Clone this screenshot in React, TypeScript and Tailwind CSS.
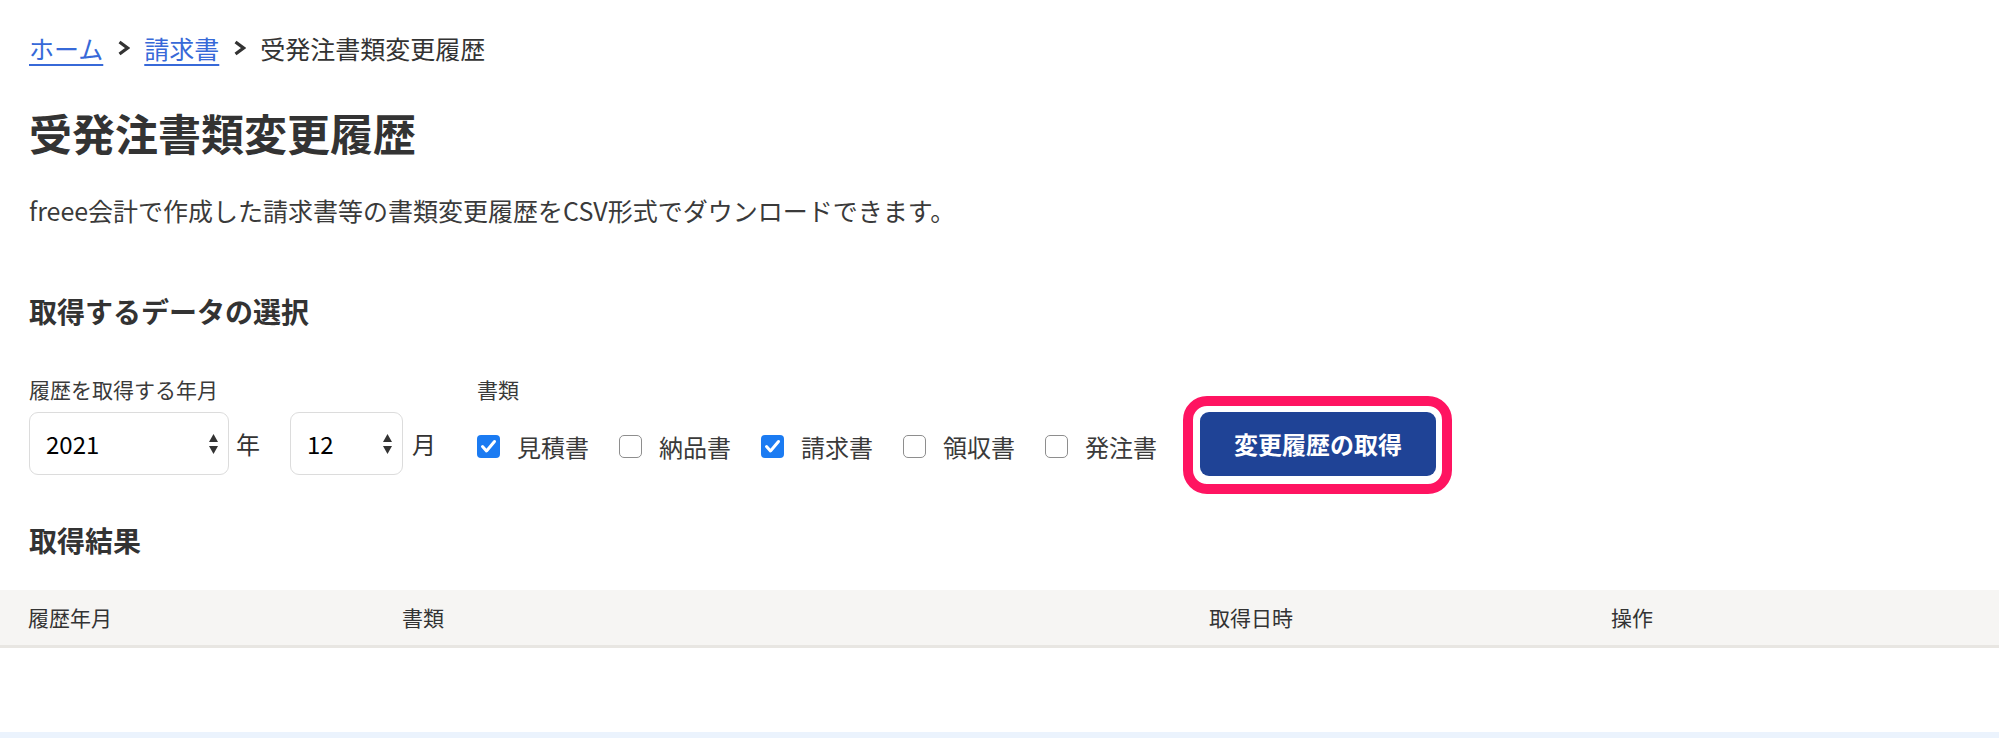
import React from "react";

const docs = [
  { label: "見積書", checked: true },
  { label: "納品書", checked: false },
  { label: "請求書", checked: true },
  { label: "領収書", checked: false },
  { label: "発注書", checked: false },
];

function Chevron() {
  return (
    <svg width="13" height="16" viewBox="0 0 13 16" className="mx-[14px] shrink-0">
      <polyline points="2.5,2 10.5,8 2.5,14" fill="none" stroke="#333" strokeWidth="3.2" />
    </svg>
  );
}

function SelectBox({ value, width }: { value: string; width: string }) {
  return (
    <div
      className={`${width} h-[63px] flex items-center justify-between pl-[16px] pr-[10px] bg-white border-[1.5px] border-[#dcdcdc] rounded-[9px] text-[24px] text-black`}
    >
      <span>{value}</span>
      <svg width="9" height="20" viewBox="0 0 9 20">
        <polygon points="4.5,0 9,8 0,8" fill="#333" />
        <polygon points="0,12 9,12 4.5,20" fill="#333" />
      </svg>
    </div>
  );
}

function Checkbox({ checked }: { checked: boolean }) {
  if (checked) {
    return (
      <span className="w-[23px] h-[23px] rounded-[4px] bg-[#1b7bf2] flex items-center justify-center shrink-0">
        <svg width="23" height="23" viewBox="0 0 23 23">
          <polyline points="5.5,11.5 9.5,16 17.5,6.5" fill="none" stroke="white" strokeWidth="3" strokeLinecap="round" strokeLinejoin="round" />
        </svg>
      </span>
    );
  }
  return <span className="w-[23px] h-[23px] rounded-[5px] border-[1.5px] border-[#8e8e8e] bg-white shrink-0" />;
}

export default function App() {
  return (
    <div className="bg-white text-[#333] font-['Noto_Sans_CJK_JP','Noto_Sans',sans-serif]">
      <div className="px-[29px] pt-[30px]">
        <nav className="flex items-center text-[25px] leading-[36px]">
          <a href="#" className="text-[#3769d8] underline underline-offset-[5px] decoration-[1.5px]">
            ホーム
          </a>
          <Chevron />
          <a href="#" className="text-[#3769d8] underline underline-offset-[5px] decoration-[1.5px]">
            請求書
          </a>
          <Chevron />
          <span className="text-[#333]">受発注書類変更履歴</span>
        </nav>

        <h1 className="mt-[34px] text-[43px] leading-[64px] font-bold">受発注書類変更履歴</h1>

        <p className="mt-[28px] text-[25px] leading-[36px] text-[#3a3a3a]">
          freee会計で作成した請求書等の書類変更履歴をCSV形式でダウンロードできます。
        </p>

        <h2 className="mt-[62px] text-[28px] leading-[42px] font-bold">取得するデータの選択</h2>

        <div className="mt-[41px] flex items-end">
          <div>
            <p className="text-[21px] leading-[32px] text-[#3a3a3a]">履歴を取得する年月</p>
            <div className="mt-[7px] h-[63px] flex items-center text-[24px]">
              <SelectBox value="2021" width="w-[200px]" />
              <span className="ml-[7px]">年</span>
              <div className="ml-[30px]">
                <SelectBox value="12" width="w-[113px]" />
              </div>
              <span className="ml-[9px]">月</span>
            </div>
          </div>

          <div className="ml-[41px]">
            <p className="text-[21px] leading-[32px] text-[#3a3a3a]">書類</p>
            <div className="mt-[7px] h-[63px] flex items-center gap-[30px] text-[24px] text-[#3a3a3a] pt-[6px]">
              {docs.map((d) => (
                <label key={d.label} className="flex items-center gap-[17px]">
                  <Checkbox checked={d.checked} />
                  <span>{d.label}</span>
                </label>
              ))}
            </div>
          </div>

          <div className="ml-[43px] h-[63px] flex items-center">
            <div className="relative">
              <button className="w-[236px] h-[64px] rounded-[9px] bg-[#1f4396] text-white text-[24px] font-bold">
                変更履歴の取得
              </button>
              <span className="absolute -left-[17px] -right-[16px] -top-[16px] -bottom-[18px] border-[10px] border-[#ff1461] rounded-[24px] pointer-events-none" />
            </div>
          </div>
        </div>

        <h2 className="mt-[44px] text-[28px] leading-[42px] font-bold">取得結果</h2>
      </div>

      <div className="mt-[29px] grid grid-cols-[374px_807px_402px_1fr] h-[58px] items-center bg-[#f6f5f3] border-b-[3px] border-[#e8e6e2] text-[21px] text-[#333]">
        <div className="pl-[28px]">履歴年月</div>
        <div className="pl-[28px]">書類</div>
        <div className="pl-[28px]">取得日時</div>
        <div className="pl-[28px]">操作</div>
      </div>

      <div className="h-[84px]" />
      <div className="h-[6px] bg-[#ebf3fd]" />
    </div>
  );
}
